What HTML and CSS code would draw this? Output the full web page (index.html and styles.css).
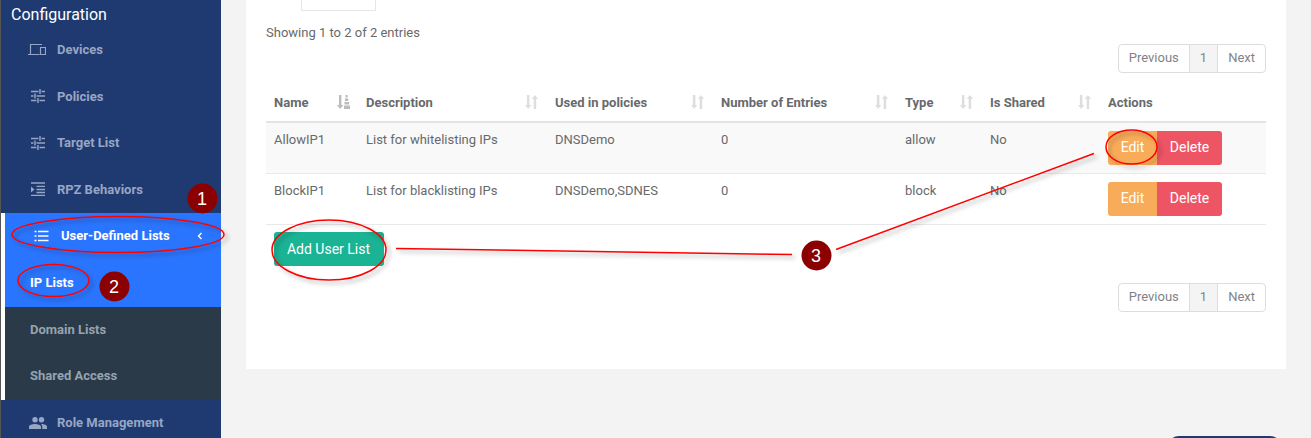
FILE: index.html
```html
<!DOCTYPE html>
<html lang="en">
<head>
<meta charset="utf-8">
<title>User-Defined Lists</title>
<link rel="stylesheet" href="styles.css">
</head>
<body>
<div class="layout">
  <aside class="sidebar">
    <div class="side-title">Configuration</div>
    <nav class="menu">
      <a class="item">
        <svg class="ico ico-dev" viewBox="0 0 18 13"><path d="M2.500 11V1.500H14M0 11.500h11.500M12.500 4.500h5v7h-5z" fill="none" stroke="currentColor" stroke-width="1.200"/></svg>
        <span>Devices</span>
      </a>
      <a class="item">
        <svg class="ico" viewBox="0 0 14 14"><path d="M0 2.500h7.500M10.500 2.500H14M0 7h2.500M5.500 7H14M0 11.500h5.500M8.500 11.500H14M9 0v5M4 4.500v5M7 9v5" fill="none" stroke="currentColor" stroke-width="1.400"/></svg>
        <span>Policies</span>
      </a>
      <a class="item">
        <svg class="ico" viewBox="0 0 14 14"><path d="M0 2.500h7.500M10.500 2.500H14M0 7h2.500M5.500 7H14M0 11.500h5.500M8.500 11.500H14M9 0v5M4 4.500v5M7 9v5" fill="none" stroke="currentColor" stroke-width="1.400"/></svg>
        <span>Target List</span>
      </a>
      <a class="item">
        <svg class="ico" viewBox="0 0 14 14"><path d="M0 1h14M5.500 4.300H14M5.500 7.500H14M5.500 10.500H14M0 13.500h14" fill="none" stroke="currentColor" stroke-width="1.300"/><path d="M0 4.500l3.500 3L0 10.500z" fill="currentColor"/></svg>
        <span>RPZ Behaviors</span>
      </a>
      <div class="group">
        <a class="item item-open">
          <svg class="ico ico-open" viewBox="0 0 14 12"><path d="M3.500 1.500H14M3.500 6H14M3.500 10.500H14" fill="none" stroke="currentColor" stroke-width="1.300"/><path d="M0 1.500h2M0 6h2M0 10.500h2" fill="none" stroke="currentColor" stroke-width="1.700"/></svg>
          <span class="open-label">User-Defined Lists</span>
          <svg class="chev" viewBox="0 0 6 8"><path d="M4.500 1L1.500 4l3 3" fill="none" stroke="currentColor" stroke-width="1.400"/></svg>
        </a>
        <a class="sub sub-active">IP Lists</a>
        <a class="sub">Domain Lists</a>
        <a class="sub sub-last">Shared Access</a>
      </div>
      <a class="item">
        <svg class="ico ico-role" viewBox="0 0 18 12"><path d="M6 5.500a2.700 2.700 0 1 0 0-5.400 2.700 2.700 0 0 0 0 5.400zM12.500 5.500a2.700 2.700 0 1 0 0-5.400 2.700 2.700 0 0 0 0 5.400zM0 12V9.800C0 8 3.500 7 6 7s6 1 6 2.800V12zM13.200 12V9.500c0-1-.5-1.800-1.300-2.400 2.400-.2 6.100.8 6.100 2.700V12z" fill="currentColor"/></svg>
        <span>Role Management</span>
      </a>
    </nav>
  </aside>
  <main class="content">
    <section class="card">
      <div class="length-box"></div>
      <p class="info">Showing 1 to 2 of 2 entries</p>
      <div class="pager-row pager-top">
        <div class="pager">
          <span class="page">Previous</span><span class="page page-current">1</span><span class="page">Next</span>
        </div>
      </div>
      <table class="table">
        <colgroup>
          <col class="c-name"><col class="c-desc"><col class="c-used"><col class="c-num"><col class="c-type"><col class="c-shared"><col class="c-act">
        </colgroup>
        <thead>
          <tr>
            <th><span class="th-in">Name<svg class="sort sort-on" viewBox="0 0 13 14"><path d="M2 0h2.400v10h2L3.200 14 0 10h2z" fill="currentColor"/><path d="M8.500 0h2.200v2.500H8.500zM8 3.500h3.200v2.500H8zM7.500 7h4.700v2.500H7.500zM7 10.500h6V14H7z" fill="currentColor"/></svg></span></th>
            <th><span class="th-in">Description<svg class="sort" viewBox="0 0 13 14"><path d="M1.900 0h2.500v10h2L3.150 14 0 10h1.900zM8.700 14h2.500V4H13L9.950 0 6.700 4h2z" fill="currentColor"/></svg></span></th>
            <th><span class="th-in">Used in policies<svg class="sort" viewBox="0 0 13 14"><path d="M1.900 0h2.500v10h2L3.150 14 0 10h1.900zM8.700 14h2.500V4H13L9.950 0 6.700 4h2z" fill="currentColor"/></svg></span></th>
            <th><span class="th-in">Number of Entries<svg class="sort" viewBox="0 0 13 14"><path d="M1.900 0h2.500v10h2L3.150 14 0 10h1.900zM8.700 14h2.500V4H13L9.950 0 6.700 4h2z" fill="currentColor"/></svg></span></th>
            <th><span class="th-in">Type<svg class="sort" viewBox="0 0 13 14"><path d="M1.900 0h2.500v10h2L3.150 14 0 10h1.900zM8.700 14h2.500V4H13L9.950 0 6.700 4h2z" fill="currentColor"/></svg></span></th>
            <th><span class="th-in">Is Shared<svg class="sort" viewBox="0 0 13 14"><path d="M1.900 0h2.500v10h2L3.150 14 0 10h1.900zM8.700 14h2.500V4H13L9.950 0 6.700 4h2z" fill="currentColor"/></svg></span></th>
            <th>Actions</th>
          </tr>
        </thead>
        <tbody>
          <tr class="odd">
            <td>AllowIP1</td><td>List for whitelisting IPs</td><td>DNSDemo</td><td>0</td><td>allow</td><td>No</td>
            <td class="td-act"><span class="btns"><button class="btn btn-edit">Edit</button><button class="btn btn-del">Delete</button></span></td>
          </tr>
          <tr>
            <td>BlockIP1</td><td>List for blacklisting IPs</td><td>DNSDemo,SDNES</td><td>0</td><td>block</td><td>No</td>
            <td class="td-act"><span class="btns"><button class="btn btn-edit">Edit</button><button class="btn btn-del">Delete</button></span></td>
          </tr>
        </tbody>
      </table>
      <div class="add-row"><button class="btn-add">Add User List</button></div>
      <div class="pager-row pager-bottom">
        <div class="pager">
          <span class="page">Previous</span><span class="page page-current">1</span><span class="page">Next</span>
        </div>
      </div>
    </section>
  </main>
</div>
<div class="float-pill"></div>
<svg class="notes" width="1311" height="438" viewBox="0 0 1311 438">
  <defs>
    <filter id="sh" x="-20%" y="-40%" width="140%" height="200%">
      <feDropShadow dx="3" dy="3" stdDeviation="2" flood-color="#000" flood-opacity=".32"/>
    </filter>
  </defs>
  <g class="note-line" filter="url(#sh)">
    <ellipse cx="118" cy="234.500" rx="106" ry="18"/>
    <ellipse cx="53.500" cy="280.500" rx="35.500" ry="16"/>
    <ellipse cx="1131.500" cy="147" rx="25.500" ry="17"/>
    <ellipse cx="329" cy="250" rx="57" ry="30"/>
    <path d="M396 248.500L792 254.500"/>
    <path d="M836 249.500L1094 153.500"/>
  </g>
  <g class="note-dot">
    <circle cx="202.500" cy="198.500" r="15"/>
    <circle cx="114.500" cy="286.500" r="15"/>
    <circle cx="816.500" cy="255.500" r="15"/>
  </g>
  <g class="note-num">
    <text x="202" y="205">1</text>
    <text x="114" y="293">2</text>
    <text x="816" y="262">3</text>
  </g>
</svg>
</body>
</html>
```
FILE: styles.css
```css
* { box-sizing: border-box; }
html, body { margin: 0; height: 438px; overflow: hidden; }
body {
  position: relative;
  background: #f3f3f3;
  font-family: Roboto, "Liberation Sans", sans-serif;
  font-size: 13px;
  color: #676a6c;
}
.layout { display: flex; height: 438px; }

.sidebar {
  width: 221px;
  flex: none;
  background: #1f3a70;
  border-left: 1px solid #555;
  overflow: hidden;
}
.side-title {
  height: 26.500px;
  padding: 5px 0 0 10px;
  color: #fff;
  font-size: 16px;
  line-height: 19px;
}
.menu { display: flex; flex-direction: column; }
.item {
  display: flex;
  align-items: center;
  height: 46.500px;
  padding-left: 28px;
  color: #97a6c4;
  font-weight: 700;
  font-size: 13px;
}
.ico { width: 18px; height: 14px; flex: none; margin-right: 10px; }
.ico-dev { height: 13px; margin-left: -1px; margin-right: 11px; }
.ico-role { height: 12px; }
.group { border-left: 4px solid #fff; }
.item-open {
  background: #2a75ff;
  color: #fff;
  padding-left: 28px;
}
.ico-open { width: 15px; height: 12px; margin-left: 1px; margin-right: 12px; }
.open-label { flex: 1; }
.chev { width: 6px; height: 8px; margin-right: 18px; }
.sub {
  display: flex;
  align-items: center;
  height: 46px;
  padding-left: 25px;
  background: #2a3a48;
  color: #97a3b0;
  font-weight: 700;
}
.sub-active { background: #2a75ff; color: #fff; height: 47.500px; padding-bottom: .5px; }
.sub-last { height: 47px; padding-bottom: 1px; }

.content { flex: 1; padding: 0 25px 0 25px; }
.card {
  background: #fff;
  height: 369px;
  padding: 0 20px;
}
.length-box {
  width: 75px;
  height: 11px;
  margin-left: 35px;
  border: 1px solid #e5e6e7;
  border-top: 0;
}
.info { margin: 0; padding-top: 14px; line-height: 15px; height: 33px; }
.pager-row { display: flex; justify-content: flex-end; }
.pager-top { height: 43px; }
.pager {
  display: flex;
  height: 29px;
  border: 1px solid #ddd;
  border-radius: 4px;
  overflow: hidden;
  color: #7f8388;
  line-height: 25px;
}
.page { padding: 0 10px; }
.page-current { background: #f4f4f4; border-left: 1px solid #ddd; border-right: 1px solid #ddd; padding: 0 10px; }

.table { width: 1000px; table-layout: fixed; border-collapse: collapse; }
.c-name { width: 92px; }
.c-desc { width: 189px; }
.c-used { width: 166px; }
.c-num { width: 184px; }
.c-type { width: 85px; }
.c-shared { width: 118px; }
.c-act { width: 166px; }
th {
  height: 35px;
  padding: 0 8px 4px;
  text-align: left;
  font-weight: 700;
  font-size: 13px;
  border-bottom: 2px solid #e4e4e4;
  vertical-align: middle;
}
.th-in { display: flex; justify-content: space-between; align-items: center; height: 16px; }
.sort { width: 13px; height: 14px; flex: none; color: #dedede; margin-right: 1px; }
.sort-on { color: #bcbcbc; margin-right: 0; }
td {
  height: 51px;
  padding: 8px 8px 0;
  vertical-align: top;
  line-height: 17px;
  border-bottom: 1px solid #e9e9e9;
}
.odd td { background: #f9f9f9; }
.td-act { padding-top: 8px; }
.btns { display: flex; }
.btn {
  height: 34px;
  padding: 0 0 2px;
  border: 0;
  color: #fff;
  font: 14px Roboto, "Liberation Sans", sans-serif;
}
.btn-edit { width: 49px; background: #f8ac59; border-radius: 3px 0 0 3px; }
.btn-del { width: 65px; background: #ed5565; border-radius: 0 3px 3px 0; }
.add-row { padding: 7px 0 0 8px; height: 58px; }
.btn-add {
  width: 110px;
  height: 34px;
  padding: 0 1px 0 0;
  border: 0;
  border-radius: 3px;
  background: #1ab394;
  color: #fff;
  font: 14px Roboto, "Liberation Sans", sans-serif;
}

.float-pill {
  position: absolute;
  left: 1167px;
  top: 436px;
  width: 115px;
  height: 20px;
  background: #1f3a70;
  border-radius: 12px 12px 0 0;
}
.notes { position: absolute; left: 0; top: 0; pointer-events: none; }
.note-line ellipse, .note-line path { fill: none; stroke: #f00; stroke-width: 1.500; }
.note-dot circle { fill: #8b0000; }
.note-num text {
  fill: #fff;
  font-family: "Liberation Sans", sans-serif;
  font-size: 18px;
  text-anchor: middle;
}
```
